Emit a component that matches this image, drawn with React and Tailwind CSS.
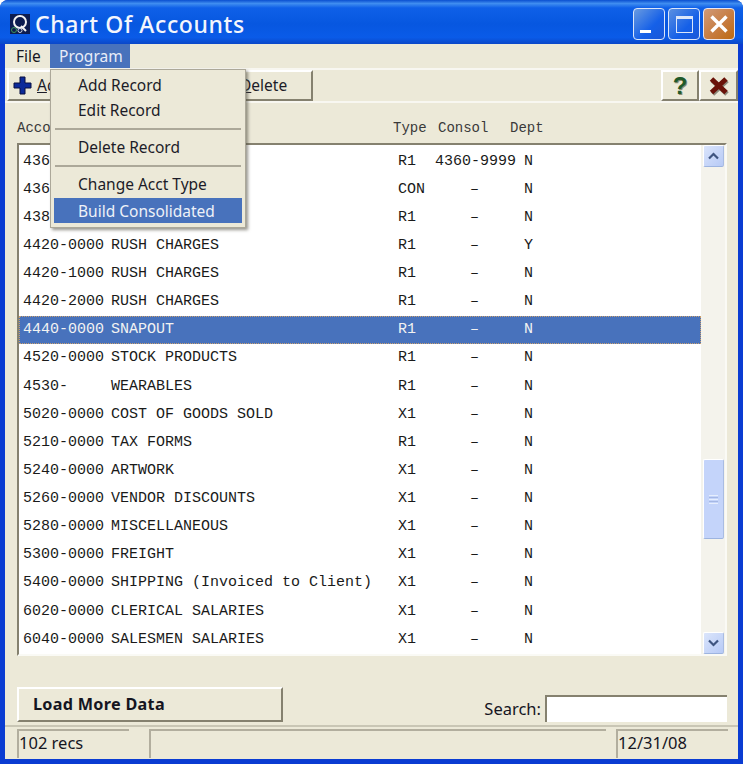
const ui = { fontFamily: '"Noto Sans", "Liberation Sans", sans-serif' };
const mono = { fontFamily: '"Liberation Mono", monospace' };

const rows = [
  ['436', '', 'R1', '4360-9999', 'N'],
  ['436', '', 'CON', '–', 'N'],
  ['438', '', 'R1', '–', 'N'],
  ['4420-0000', 'RUSH CHARGES', 'R1', '–', 'Y'],
  ['4420-1000', 'RUSH CHARGES', 'R1', '–', 'N'],
  ['4420-2000', 'RUSH CHARGES', 'R1', '–', 'N'],
  ['4440-0000', 'SNAPOUT', 'R1', '–', 'N', true],
  ['4520-0000', 'STOCK PRODUCTS', 'R1', '–', 'N'],
  ['4530-', 'WEARABLES', 'R1', '–', 'N'],
  ['5020-0000', 'COST OF GOODS SOLD', 'X1', '–', 'N'],
  ['5210-0000', 'TAX FORMS', 'R1', '–', 'N'],
  ['5240-0000', 'ARTWORK', 'X1', '–', 'N'],
  ['5260-0000', 'VENDOR DISCOUNTS', 'X1', '–', 'N'],
  ['5280-0000', 'MISCELLANEOUS', 'X1', '–', 'N'],
  ['5300-0000', 'FREIGHT', 'X1', '–', 'N'],
  ['5400-0000', 'SHIPPING (Invoiced to Client)', 'X1', '–', 'N'],
  ['6020-0000', 'CLERICAL SALARIES', 'X1', '–', 'N'],
  ['6040-0000', 'SALESMEN SALARIES', 'X1', '–', 'N'],
];

function Row({ r }) {
  const sel = r[5];
  return (
    <div
      className={`flex h-[28.14px] items-center whitespace-pre text-[15px] leading-none border border-dotted ${
        sel ? 'bg-[#4872bc] text-[#f2f2f2] border-[#c9a070]' : 'text-[#1a1a1a] border-transparent'
      }`}
    >
      <span className="w-[90px] shrink-0 pl-[3px]">{r[0]}</span>
      <span className="w-[288px] shrink-0 pl-[1px]">{r[1]}</span>
      <span className="w-[37px] shrink-0">{r[2]}</span>
      <span className={`w-[89px] shrink-0 ${r[3] === '–' ? 'pl-[35px]' : ''}`}>{r[3]}</span>
      <span className="shrink-0">{r[4]}</span>
    </div>
  );
}

function Chevron({ up }) {
  return (
    <svg width="11" height="8" viewBox="0 0 11 8">
      <path d={up ? 'M1 6.5 L5.5 2 L10 6.5' : 'M1 1.5 L5.5 6 L10 1.5'} fill="none" stroke="#3f5580" strokeWidth="2.2" />
    </svg>
  );
}

function ScrollBtn({ up }) {
  return (
    <div className="h-[22px] w-[21px] flex items-center justify-center rounded-[2px] border border-white border-b-[#9db4e0] border-r-[#a9bce2] bg-[linear-gradient(135deg,#dbe5fb,#b7caf6)]">
      <Chevron up={up} />
    </div>
  );
}

function Panel({ className, children }) {
  return (
    <div
      className={`h-[29px] border-l-2 border-t-2 border-[#b2ae9e] text-[16.5px] leading-[24px] text-[#15151f] ${className}`}
      style={ui}
    >
      {children}
    </div>
  );
}

const raised =
  'border-t-2 border-l-2 border-b-2 border-r-2 border-t-white border-l-white border-b-[#85816f] border-r-[#85816f] bg-[#ece9d8]';

function MenuItem({ children, active, tall }) {
  return (
    <div
      className={`${tall ? 'h-[26px]' : 'h-[25px]'} pl-[24px] text-[15.5px] leading-[24px] ${
        active ? 'bg-[#4872bc] text-[#eef1f8] pt-[1px]' : 'text-[#1c1c28]'
      }`}
    >
      {children}
    </div>
  );
}

function Sep() {
  return <div className="mx-[1px] h-[2px] bg-[#aca899]" />;
}

export default function App() {
  return (
    <div className="relative w-[743px] h-[764px] overflow-hidden bg-white" style={ui}>
      <div className="w-full h-full flex flex-col rounded-t-[8px] overflow-hidden bg-[#0a3cd2]">
        {/* title bar */}
        <div className="h-[44px] shrink-0 flex items-center pl-[10px] pr-[8px] bg-[linear-gradient(180deg,#0a4fd0_0%,#3f8df0_8%,#0f60e8_18%,#0757e0_55%,#0a5be8_85%,#0a47c8_100%)]">
          <svg width="20" height="20" viewBox="0 0 20 20" className="shrink-0 mt-[3px]">
            <rect width="20" height="20" fill="#0c1c50" />
            <circle cx="10" cy="8" r="6" fill="none" stroke="#f2f2f2" strokeWidth="2" />
            <path d="M11 12 L16 17" stroke="#f2f2f2" strokeWidth="2" />
            <circle cx="4" cy="16" r="2.5" fill="none" stroke="#3f9a5a" strokeWidth="1" />
            <circle cx="10" cy="16.5" r="2" fill="none" stroke="#c8d0e0" strokeWidth="1" />
          </svg>
          <span className="ml-[5px] mt-[5px] text-[23px] leading-none font-medium tracking-[0.6px] text-[#f4f6fc]">Chart Of Accounts</span>
          <div className="ml-auto mt-[4px] flex gap-[3px]">
            <div className="w-[32px] h-[32px] rounded-[4px] border border-[#dbe6fa] bg-[linear-gradient(135deg,#6a9be0,#1560e8_60%,#1a58d8)] flex items-end pl-[6px] pb-[6px]">
              <div className="w-[11px] h-[3px] bg-white" />
            </div>
            <div className="w-[32px] h-[32px] rounded-[4px] border border-[#dbe6fa] bg-[linear-gradient(135deg,#5a8fe0,#1560e8_60%,#1a58d8)] flex items-center justify-center">
              <div className="w-[17px] h-[17px] border border-[#dbe6fa] border-t-[3px]" />
            </div>
            <div className="w-[32px] h-[32px] rounded-[4px] border border-[#e8e6f0] bg-[linear-gradient(135deg,#d09a78,#c67a3c_60%,#bd6a10)] flex items-center justify-center">
              <svg width="20" height="20" viewBox="0 0 20 20">
                <path d="M2.5 2.5 L17.5 17.5 M17.5 2.5 L2.5 17.5" stroke="#fff" strokeWidth="3.4" />
              </svg>
            </div>
          </div>
        </div>

        {/* client area */}
        <div className="flex-1 ml-[5px] mr-[5px] mb-[5px] flex flex-col bg-[#ece9d8]">
          {/* menu bar */}
          <div className="h-[24px] shrink-0 flex text-[15.5px] leading-[25px] text-[#15151f]">
            <div className="w-[45px] pl-[11px]">File</div>
            <div className="w-[80px] pl-[9px] bg-[#4872bc] text-[#e8edf8]">Program</div>
          </div>
          {/* toolbar */}
          <div className="h-[35px] shrink-0 flex items-stretch border-t-2 border-[#f8f7f1] border-b-2 border-b-[#f8f7f1] pl-[2px] pr-0">
            <div className={`w-[213px] flex items-center pl-[4px] ${raised}`}>
              <svg width="20" height="20" viewBox="0 0 20 20" className="shrink-0">
                <path d="M7 1 H12 V7 H18 V12 H12 V18 H7 V12 H1 V7 H7 Z" fill="#0c2a9a" stroke="#080f40" strokeWidth="1" />
              </svg>
              <span className="ml-[4px] text-[15.5px] text-[#1c1c28]"><span className="underline">A</span>dd</span>
            </div>
            <div className={`w-[93px] flex items-center pl-[18px] ${raised}`}>
              <span className="text-[15.5px] text-[#1c1c28]"><span className="underline">D</span>elete</span>
            </div>
            <div className="flex-1" />
            <div className={`w-[38px] flex items-center justify-center ${raised}`}>
              <span className="text-[24px] font-bold leading-none text-[#1f5a2a] [text-shadow:1px_1px_0_#8d8a70]" style={{ fontFamily: '"Liberation Sans", sans-serif' }}>?</span>
            </div>
            <div className={`w-[39px] flex items-center justify-center ${raised}`}>
              <svg width="22" height="20" viewBox="0 0 22 20">
                <path d="M3.5 3 L18 16.5 M18 3 L3.5 16.5" stroke="#8d8a7a" strokeWidth="5" transform="translate(1 1.5)" />
                <path d="M3.5 3 L18 16.5 M18 3 L3.5 16.5" stroke="#6a1208" strokeWidth="5" />
              </svg>
            </div>
          </div>

          {/* content */}
          <div className="flex-1 flex flex-col pl-[12px] pr-[11px] pt-[15px]" style={mono}>
            <div className="h-[25px] shrink-0 flex pt-[2px] text-[14px] leading-[17px] text-[#3a3a3a] whitespace-pre">
              <span className="w-[376px]">Acco</span>
              <span className="w-[45px]">Type</span>
              <span className="w-[72px]">Consol</span>
              <span>Dept</span>
            </div>
            {/* list box */}
            <div className="h-[513px] shrink-0 flex border-l-2 border-t-2 border-[#85816f] border-r-2 border-b-2 border-r-[#fafaf5] border-b-[#fafaf5] bg-white">
              <div className="flex-1 pt-[2px] overflow-hidden">
                {rows.map((r, i) => (
                  <Row key={i} r={r} />
                ))}
              </div>
              <div className="w-[24px] shrink-0 bg-[#f4f3ec] flex flex-col items-center">
                <ScrollBtn up />
                <div className="flex-1 w-full flex flex-col justify-end items-center pb-[93px]">
                  <div className="h-[80px] w-[21px] rounded-[2px] border border-white border-b-[#9db4e0] border-r-[#a9bce2] bg-[#c4d4fa] flex flex-col items-center justify-center gap-[1px]">
                    <div className="w-[9px] h-[1px] bg-[#e6eefd]" />
                    <div className="w-[9px] h-[1px] bg-[#a5b8e4]" />
                    <div className="w-[9px] h-[1px] bg-[#e6eefd]" />
                    <div className="w-[9px] h-[1px] bg-[#a5b8e4]" />
                    <div className="w-[9px] h-[1px] bg-[#e6eefd]" />
                  </div>
                </div>
                <ScrollBtn />
              </div>
            </div>

            {/* bottom controls */}
            <div className="flex-1 flex items-end justify-between pb-[3px]" style={ui}>
              <div className={`w-[266px] h-[35px] flex items-center pl-[14px] text-[16.2px] font-bold tracking-[0.3px] text-[#15151f] ${raised}`}>
                Load More Data
              </div>
              <div className="flex items-center">
                <span className="text-[16.5px] pt-[1px] text-[#15151f]">Search:</span>
                <div className="ml-[4px] w-[182px] h-[27px] bg-white border-t-2 border-l-2 border-[#85816f]" />
              </div>
            </div>
          </div>

          {/* status bar */}
          <div className="h-[34px] shrink-0 border-t-2 border-[#c9c6b5] pt-[2px] pl-[12px] flex">
            <Panel className="w-[112px]">102 recs</Panel>
            <Panel className="ml-[20px] w-[457px]" />
            <Panel className="ml-[10px] w-[112px]">12/31/08</Panel>
          </div>
        </div>
      </div>

      {/* program dropdown */}
      <div className="absolute left-[50px] top-[69px] w-[196px] h-[159px] bg-[#ece9d8] border border-[#aca899] shadow-[2px_2px_3px_rgba(80,78,65,0.6)] px-[3px] pt-[3px]">
        <MenuItem>Add Record</MenuItem>
        <MenuItem>Edit Record</MenuItem>
        <div className="h-[12px] flex items-center"><div className="w-full"><Sep /></div></div>
        <MenuItem>Delete Record</MenuItem>
        <div className="h-[12px] flex items-center"><div className="w-full"><Sep /></div></div>
        <MenuItem tall>Change Acct Type</MenuItem>
        <MenuItem active>Build Consolidated</MenuItem>
      </div>
    </div>
  );
}
